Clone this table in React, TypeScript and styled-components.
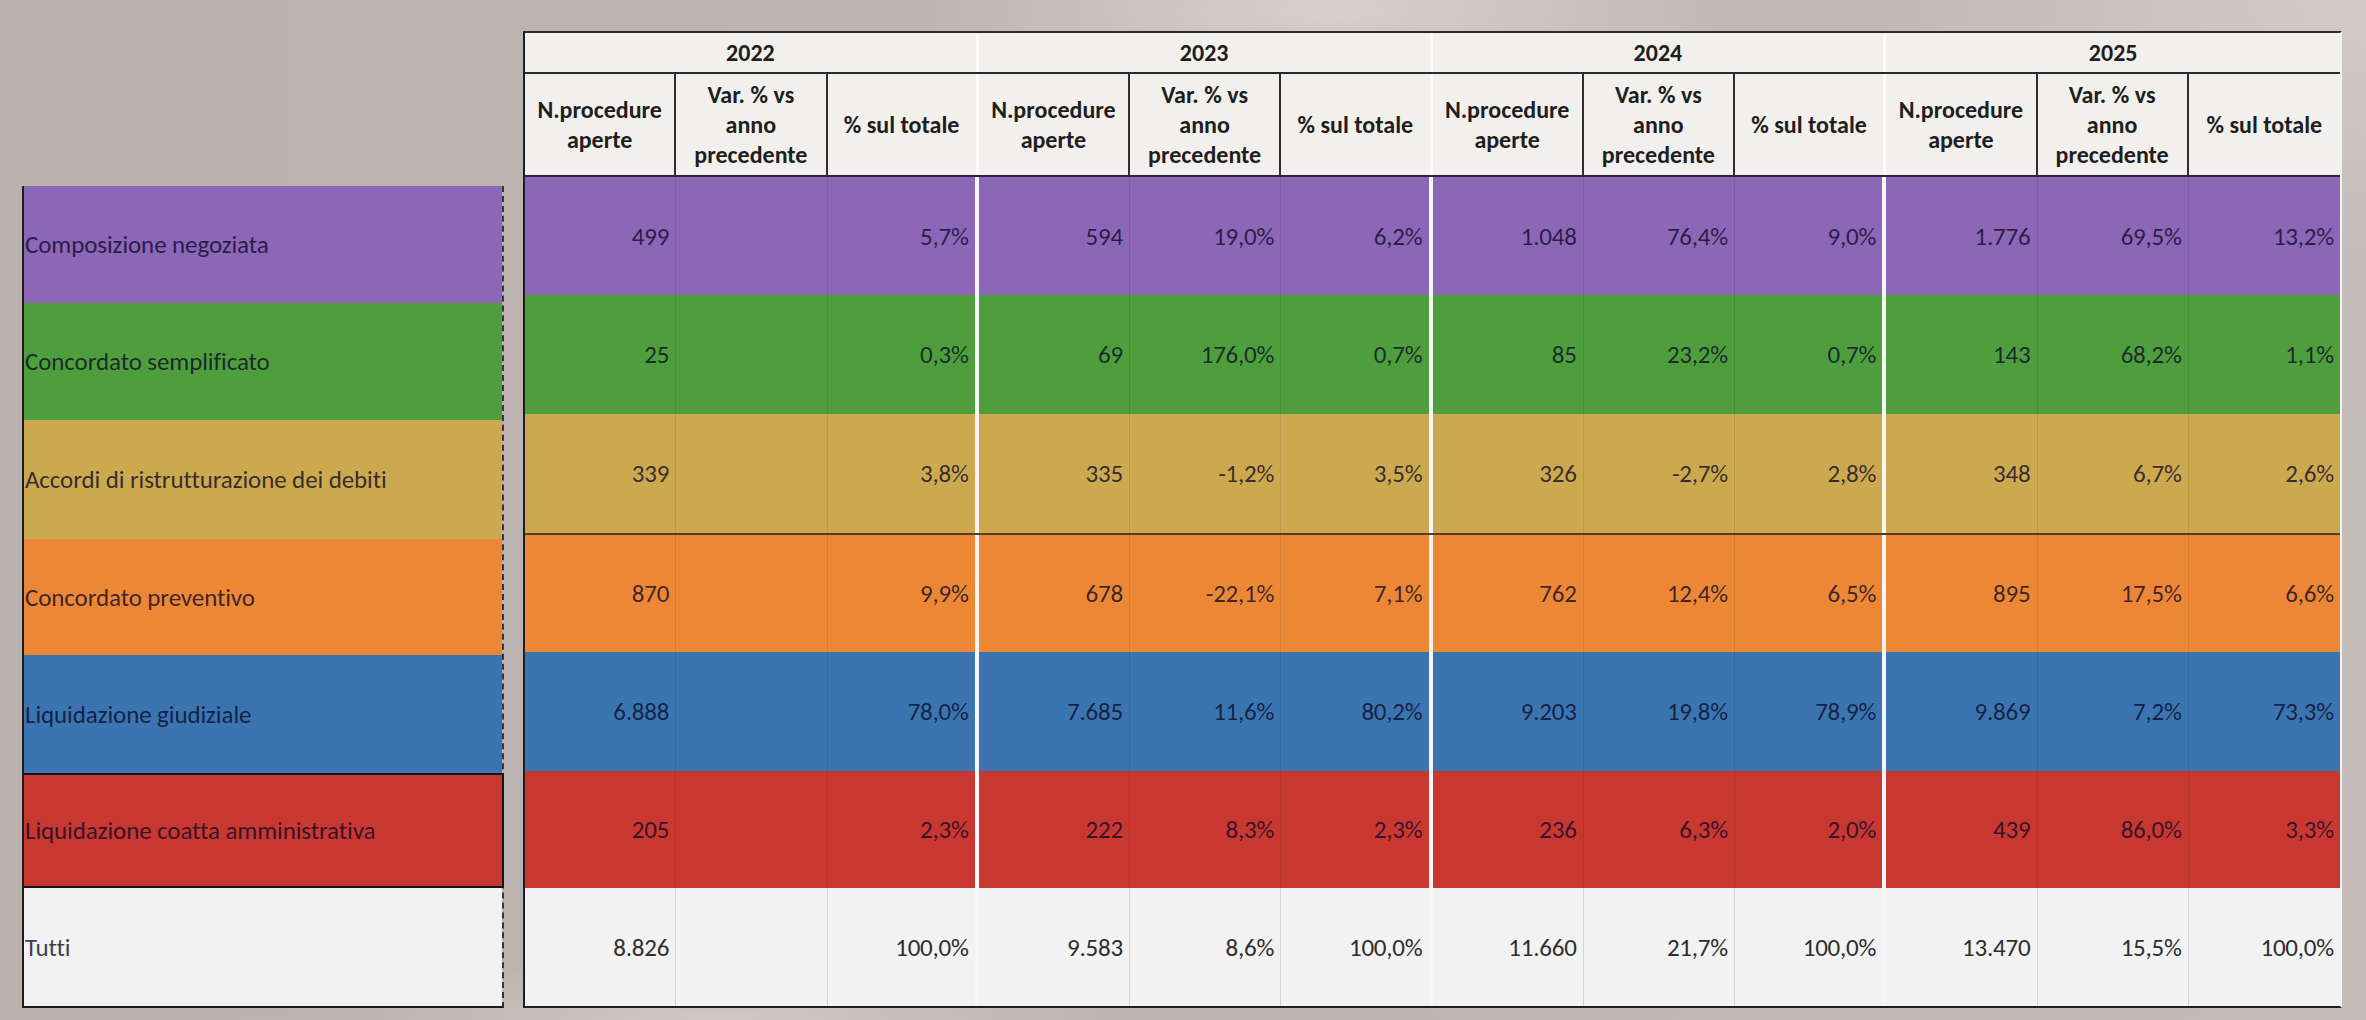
import React from "react";
import styled, { createGlobalStyle } from "styled-components";

const FONT = `"Carlito", "Lato", "Liberation Sans", sans-serif`;

const Global = createGlobalStyle`
  * { box-sizing: border-box; }
  html, body { margin: 0; padding: 0; }
  body {
    font-family: ${FONT};
    background-color: #bdb4b1;
    background-image:
      radial-gradient(ellipse 420px 90px at 1330px 10px, rgba(235,230,228,0.55), rgba(235,230,228,0) 100%),
      radial-gradient(ellipse 500px 260px at 2366px 0px, rgba(225,220,218,0.45), rgba(225,220,218,0) 100%),
      radial-gradient(ellipse 400px 60px at 720px 1020px, rgba(225,220,218,0.5), rgba(225,220,218,0) 100%),
      linear-gradient(90deg, #bbb2af 0%, #bfb6b3 60%, #c4bcb9 100%);
    overflow: hidden;
  }
`;

const Page = styled.div`
  width: 2366px;
  height: 1020px;
  display: flex;
  align-items: flex-end;
  gap: 19px;
  padding: 33px 0 12px 22px;
`;

const Legend = styled.div`
  width: 482px;
  display: flex;
  flex-direction: column;
  border-left: 2px solid #1c1c1c;
  border-right: 2px dashed #3a3436;
  border-bottom: 2px solid #1c1c1c;
`;

const LegendRow = styled.div<{ $bg: string; $h: number; $boxed?: boolean }>`
  height: ${(p) => p.$h}px;
  background: ${(p) => p.$bg};
  display: flex;
  align-items: center;
  padding-left: 1px;
  font-size: 25px;
  color: rgba(12, 10, 40, 0.8);
  white-space: nowrap;
  letter-spacing: -0.1px;
  ${(p) => (p.$boxed ? "border: 2px solid #151515; border-left: none; margin-right: -2px;" : "")}
`;

const Table = styled.div`
  width: 1819px;
  display: flex;
  flex-direction: column;
  border-top: 2px solid #2a2a2e;
  border-left: 2px solid #1e1e22;
  border-bottom: 2px solid #1e1e22;
  border-right: 2px solid #f4f2ee;
`;

const YearRow = styled.div`
  height: 41px;
  display: grid;
  grid-template-columns: repeat(4, 1fr);
  background: #f2f0ec;
  border-bottom: 2px solid #2a2a2e;
`;

const YearCell = styled.div<{ $last?: boolean }>`
  display: flex;
  align-items: center;
  justify-content: center;
  font-weight: 700;
  font-size: 24px;
  color: #1e1e1e;
  border-right: ${(p) => (p.$last ? "none" : "3px solid #fbfaf8")};
`;

const SubRow = styled.div`
  height: 103px;
  display: grid;
  grid-template-columns: repeat(12, 1fr);
  background: #f2f0ec;
  border-bottom: 2px solid #2a2440;
`;

const SubCell = styled.div<{ $edge: "group" | "inner" | "last" }>`
  display: flex;
  align-items: center;
  justify-content: center;
  text-align: center;
  font-weight: 700;
  font-size: 24px;
  line-height: 30px;
  color: #1e1e1e;
  border-right: ${(p) =>
    p.$edge === "group" ? "3px solid #fbfaf8" : p.$edge === "inner" ? "2px solid #2e2e2e" : "none"};
`;

const DataRow = styled.div<{ $bg: string; $h: number; $top?: string }>`
  height: ${(p) => p.$h}px;
  display: grid;
  grid-template-columns: repeat(12, 1fr);
  background: ${(p) => p.$bg};
  ${(p) => (p.$top ? `border-top: 2px solid ${p.$top};` : "")}
`;

const DataCell = styled.div<{ $edge: "group" | "inner" | "last"; $light?: boolean }>`
  display: flex;
  align-items: center;
  justify-content: flex-end;
  padding-right: 6px;
  font-size: 25px;
  color: ${(p) => (p.$light ? "#2e2e2e" : "rgba(12, 10, 40, 0.78)")};
  letter-spacing: -0.2px;
  border-right: ${(p) =>
    p.$edge === "group"
      ? "4px solid #f8f5fa"
      : p.$edge === "inner"
      ? p.$light
        ? "1px solid #d3d3d3"
        : "1px solid rgba(0,0,0,0.09)"
      : "none"};
`;

type Row = { label: string; color: string; vals: string[]; lh: number; th: number; boxed?: boolean; top?: string; light?: boolean };

const rows: Row[] = [
  { label: "Composizione negoziata", color: "#8c66b7", lh: 117, th: 118,
    vals: ["499", "", "5,7%", "594", "19,0%", "6,2%", "1.048", "76,4%", "9,0%", "1.776", "69,5%", "13,2%"] },
  { label: "Concordato semplificato", color: "#4f9e3d", lh: 117, th: 119,
    vals: ["25", "", "0,3%", "69", "176,0%", "0,7%", "85", "23,2%", "0,7%", "143", "68,2%", "1,1%"] },
  { label: "Accordi di ristrutturazione dei debiti", color: "#cca84f", lh: 119, th: 119,
    vals: ["339", "", "3,8%", "335", "-1,2%", "3,5%", "326", "-2,7%", "2,8%", "348", "6,7%", "2,6%"] },
  { label: "Concordato preventivo", color: "#ec8735", lh: 116, th: 119, top: "#5a3a22",
    vals: ["870", "", "9,9%", "678", "-22,1%", "7,1%", "762", "12,4%", "6,5%", "895", "17,5%", "6,6%"] },
  { label: "Liquidazione giudiziale", color: "#3a75b1", lh: 118, th: 119,
    vals: ["6.888", "", "78,0%", "7.685", "11,6%", "80,2%", "9.203", "19,8%", "78,9%", "9.869", "7,2%", "73,3%"] },
  { label: "Liquidazione coatta amministrativa", color: "#c83831", lh: 115, th: 117, boxed: true,
    vals: ["205", "", "2,3%", "222", "8,3%", "2,3%", "236", "6,3%", "2,0%", "439", "86,0%", "3,3%"] },
  { label: "Tutti", color: "#f2f2f2", lh: 118, th: 118, light: true,
    vals: ["8.826", "", "100,0%", "9.583", "8,6%", "100,0%", "11.660", "21,7%", "100,0%", "13.470", "15,5%", "100,0%"] },
];

const years = ["2022", "2023", "2024", "2025"];
const subHeads: React.ReactNode[] = [
  <>N.procedure<br />aperte</>,
  <>Var. % vs<br />anno<br />precedente</>,
  <>% sul totale</>,
];

const edgeOf = (i: number): "group" | "inner" | "last" =>
  i === 11 ? "last" : i % 3 === 2 ? "group" : "inner";

export default function App() {
  return (
    <>
      <Global />
      <Page>
        <Legend>
          {rows.map((r) => (
            <LegendRow key={r.label} $bg={r.color} $h={r.lh} $boxed={r.boxed}>
              {r.label}
            </LegendRow>
          ))}
        </Legend>
        <Table>
          <YearRow>
            {years.map((y, i) => (
              <YearCell key={y} $last={i === 3}>{y}</YearCell>
            ))}
          </YearRow>
          <SubRow>
            {Array.from({ length: 12 }).map((_, i) => (
              <SubCell key={i} $edge={edgeOf(i)}>{subHeads[i % 3]}</SubCell>
            ))}
          </SubRow>
          {rows.map((r) => (
            <DataRow key={r.label} $bg={r.color} $h={r.th} $top={r.top}>
              {r.vals.map((v, i) => (
                <DataCell key={i} $edge={edgeOf(i)} $light={r.light}>{v}</DataCell>
              ))}
            </DataRow>
          ))}
        </Table>
      </Page>
    </>
  );
}
